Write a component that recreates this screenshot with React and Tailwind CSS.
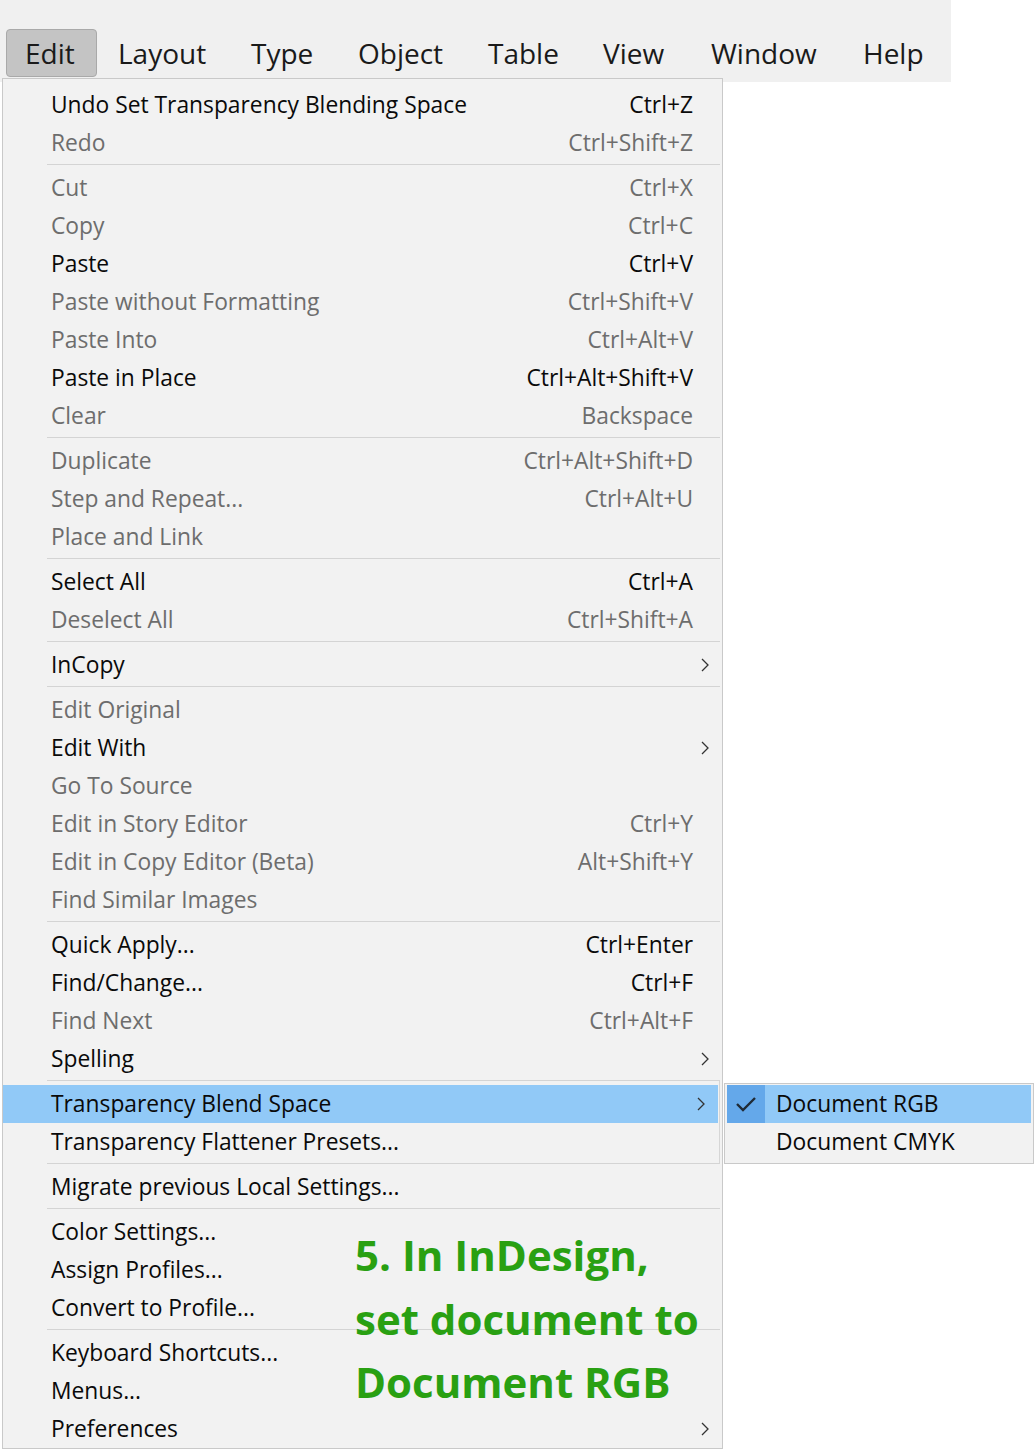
import React from 'react';

const bar = [
  { label: 'Edit', w: 'w-[91px]', active: true },
  { label: 'Layout', w: 'w-[133px]' },
  { label: 'Type', w: 'w-[107px]' },
  { label: 'Object', w: 'w-[130px]' },
  { label: 'Table', w: 'w-[115px]' },
  { label: 'View', w: 'w-[108px]' },
  { label: 'Window', w: 'w-[152px]' },
  { label: 'Help', w: 'w-[109px]' },
];

// [label, shortcut, disabled, submenu, highlighted]
const groups = [
  [
    ['Undo Set Transparency Blending Space', 'Ctrl+Z'],
    ['Redo', 'Ctrl+Shift+Z', true],
  ],
  [
    ['Cut', 'Ctrl+X', true],
    ['Copy', 'Ctrl+C', true],
    ['Paste', 'Ctrl+V'],
    ['Paste without Formatting', 'Ctrl+Shift+V', true],
    ['Paste Into', 'Ctrl+Alt+V', true],
    ['Paste in Place', 'Ctrl+Alt+Shift+V'],
    ['Clear', 'Backspace', true],
  ],
  [
    ['Duplicate', 'Ctrl+Alt+Shift+D', true],
    ['Step and Repeat...', 'Ctrl+Alt+U', true],
    ['Place and Link', '', true],
  ],
  [
    ['Select All', 'Ctrl+A'],
    ['Deselect All', 'Ctrl+Shift+A', true],
  ],
  [['InCopy', '', false, true]],
  [
    ['Edit Original', '', true],
    ['Edit With', '', false, true],
    ['Go To Source', '', true],
    ['Edit in Story Editor', 'Ctrl+Y', true],
    ['Edit in Copy Editor (Beta)', 'Alt+Shift+Y', true],
    ['Find Similar Images', '', true],
  ],
  [
    ['Quick Apply...', 'Ctrl+Enter'],
    ['Find/Change...', 'Ctrl+F'],
    ['Find Next', 'Ctrl+Alt+F', true],
    ['Spelling', '', false, true],
  ],
  [
    ['Transparency Blend Space', '', false, true, true],
    ['Transparency Flattener Presets...', ''],
  ],
  [['Migrate previous Local Settings...', '']],
  [
    ['Color Settings...', ''],
    ['Assign Profiles...', ''],
    ['Convert to Profile...', ''],
  ],
  [
    ['Keyboard Shortcuts...', ''],
    ['Menus...', ''],
    ['Preferences', '', false, true],
  ],
];

const Chevron = () => (
  <svg width="8" height="14" viewBox="0 0 8 14" fill="none">
    <polyline points="1,1 7,7 1,13" stroke="#333" strokeWidth="1.3" />
  </svg>
);

const Row = ({ item }) => {
  const [label, shortcut, disabled, sub, hi] = item;
  const color = disabled ? 'text-[#6d6d6d]' : 'text-[#0a0a0a]';
  return (
    <div className={`flex items-center h-[38px] ${hi ? 'bg-[#91c9f7] mr-[4px]' : ''}`}>
      <span className={`flex-1 pl-[48px] whitespace-nowrap ${color}`}>{label}</span>
      <span className={`whitespace-nowrap ${color}`}>{shortcut}</span>
      <span className="w-[29px] shrink-0 pl-[8px] flex items-center">{sub && <Chevron />}</span>
    </div>
  );
};

export default function App() {
  return (
    <div
      className="relative w-[1034px] h-[1450px] overflow-hidden bg-white"
      style={{ fontFamily: '"Open Sans", "Noto Sans", sans-serif' }}
    >
      <div className="w-[951px] h-[82px] bg-[#f0f0f0] pt-[29px] pl-[6px] flex items-start text-[28px] text-[#1a1a1a]">
        {bar.map((b) => (
          <div
            key={b.label}
            className={`${b.w} h-[48px] flex items-center leading-none ${
              b.active ? 'bg-[#c4c4c4] border border-[#a9a9a9] rounded-[4px] pl-[18px]' : 'pl-[21px]'
            }`}
          >
            {b.label}
          </div>
        ))}
      </div>

      <div className="ml-[2px] -mt-[4px] w-[721px] border border-[#c9c9c9] bg-[#f2f2f2] pt-[7px] text-[22.8px] leading-none">
        {groups.map((g, gi) => (
          <div key={gi}>
            {gi > 0 && (
              <div className="h-[7px] pt-[2px]">
                <div className="h-px bg-[#d4d4d4] ml-[44px] mr-[2px]" />
              </div>
            )}
            {g.map((item) => (
              <Row key={item[0]} item={item} />
            ))}
          </div>
        ))}
      </div>

      {/* submenu */}
      <div className="absolute left-[719px] top-[1081px] w-px h-[82px] bg-[#d6d6d6]" />
      <div className="absolute left-[724px] top-[1083px] w-[310px] h-[81px] border border-[#c9c9c9] bg-[#f2f2f2] p-[2px] pt-[1px] text-[22.8px] leading-none text-[#0a0a0a]">
        <div className="flex items-center h-[38px] bg-[#91c9f7]">
          <div className="w-[38px] h-[38px] bg-[#64a8ea] flex items-center justify-center">
            <svg width="22" height="16" viewBox="0 0 22 16" fill="none">
              <polyline points="2,8 8,14 20,2" stroke="#1f2a36" strokeWidth="2.4" />
            </svg>
          </div>
          <span className="pl-[11px]">Document RGB</span>
        </div>
        <div className="flex items-center h-[38px]">
          <span className="pl-[49px]">Document CMYK</span>
        </div>
      </div>

      {/* annotation */}
      <div className="absolute left-[355px] top-[1223px] text-[42px] leading-[63.5px] font-bold text-[#29a012] whitespace-nowrap">
        <div>5. In InDesign,</div>
        <div>set document to</div>
        <div>Document RGB</div>
      </div>
    </div>
  );
}
